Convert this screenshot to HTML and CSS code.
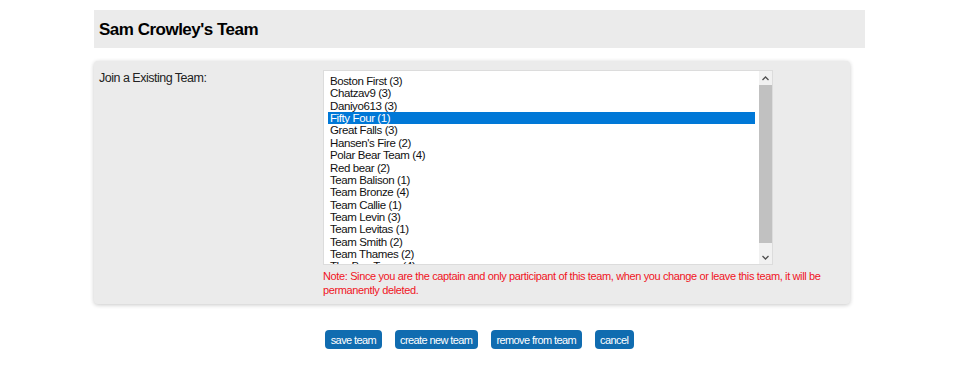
FILE: index.html
```html
<!DOCTYPE html>
<html>
<head>
<meta charset="utf-8">
<link rel="stylesheet" href="styles.css">
</head>
<body>
<div class="page">
  <div class="header"><h1>Sam Crowley's Team</h1></div>
  <div class="panel">
    <div class="label">Join a Existing Team:</div>
    <div class="field">
      <div class="listbox">
        <ul class="options">
          <li>Boston First (3)</li>
          <li>Chatzav9 (3)</li>
          <li>Daniyo613 (3)</li>
          <li class="selected">Fifty Four (1)</li>
          <li>Great Falls (3)</li>
          <li>Hansen's Fire (2)</li>
          <li>Polar Bear Team (4)</li>
          <li>Red bear (2)</li>
          <li>Team Balison (1)</li>
          <li>Team Bronze (4)</li>
          <li>Team Callie (1)</li>
          <li>Team Levin (3)</li>
          <li>Team Levitas (1)</li>
          <li>Team Smith (2)</li>
          <li>Team Thames (2)</li>
          <li>The Bee Team (4)</li>
        </ul>
        <div class="scrollbar">
          <div class="arrow up"><svg width="7" height="5" viewBox="0 0 7 5"><path d="M0.5 4 L3.5 1 L6.5 4" fill="none" stroke="#505050" stroke-width="1.3"/></svg></div>
          <div class="track"><div class="thumb"></div></div>
          <div class="arrow down"><svg width="7" height="5" viewBox="0 0 7 5"><path d="M0.5 1 L3.5 4 L6.5 1" fill="none" stroke="#505050" stroke-width="1.3"/></svg></div>
        </div>
      </div>
      <p class="note">Note: Since you are the captain and only participant of this team, when you change or leave this team, it will be permanently deleted.</p>
    </div>
  </div>
  <div class="actions">
    <button class="btn">save team</button>
    <button class="btn">create new team</button>
    <button class="btn">remove from team</button>
    <button class="btn">cancel</button>
  </div>
</div>
</body>
</html>
```
FILE: styles.css
```css
* { box-sizing: border-box; }
body {
  margin: 0;
  background: #fff;
  font-family: "Liberation Sans", Arial, sans-serif;
  color: #222;
}
.page {
  width: 771px;
  margin: 10px 0 0 94px;
}
.header {
  background: #ebebeb;
  height: 38px;
  display: flex;
  align-items: center;
  padding-left: 5px;
  padding-top: 2px;
}
.header h1 {
  margin: 0;
  font-size: 17px;
  letter-spacing: -0.5px;
  font-weight: bold;
  color: #000;
}
.panel {
  margin-top: 13px;
  width: 756px;
  background: #ebebeb;
  border-radius: 4px;
  box-shadow: 0 1px 4px rgba(0,0,0,0.22);
  display: grid;
  grid-template-columns: 224px 1fr;
  padding: 9px 0 7px 5px;
}
.label {
  font-size: 12.5px;
  letter-spacing: -0.5px;
  color: #222;
  padding-top: 1px;
}
.listbox {
  width: 450px;
  height: 195px;
  background: #fff;
  border: 1px solid #dcdcdc;
  display: flex;
  overflow: hidden;
}
.options {
  list-style: none;
  margin: 0;
  padding: 4px 4px 0 4px;
  flex: 1;
  font-size: 11.5px;
  letter-spacing: -0.4px;
  line-height: 12.36px;
  color: #111;
}
.options li {
  padding-left: 2px;
  white-space: nowrap;
}
.options li.selected {
  background: #0078d7;
  color: #fff;
}
.scrollbar {
  width: 13px;
  background: #f1f1f1;
  display: flex;
  flex-direction: column;
}
.arrow {
  height: 14px;
  display: flex;
  align-items: center;
  justify-content: center;
}
.track {
  flex: 1;
}
.thumb {
  height: 158px;
  background: #c1c1c1;
}
.note {
  margin: 4px 0 0;
  color: #f0141e;
  font-size: 11px;
  letter-spacing: -0.37px;
  line-height: 14px;
  width: 510px;
}
.actions {
  margin-top: 26px;
  display: flex;
  justify-content: center;
  gap: 13px;
}
.btn {
  font-family: "Liberation Sans", Arial, sans-serif;
  font-size: 11px;
  letter-spacing: -0.6px;
  color: #fff;
  background: #106cb0;
  border: none;
  border-radius: 4px;
  height: 19px;
  padding: 0 5.5px;
}
```
